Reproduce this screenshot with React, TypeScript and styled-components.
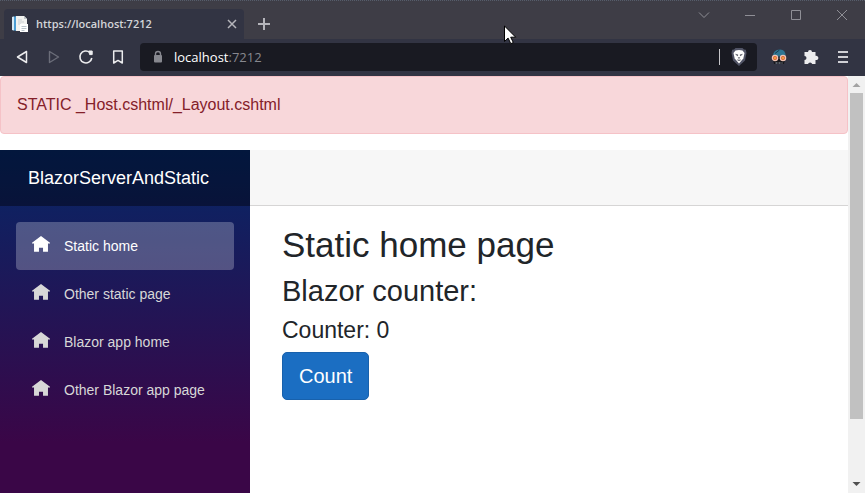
import React, { useState } from "react";
import styled, { createGlobalStyle } from "styled-components";

const GlobalStyle = createGlobalStyle`
  *, *::before, *::after { box-sizing: border-box; }
  html, body, #root { height: 100%; }
  body {
    margin: 0;
    overflow: hidden;
    font-family: "Liberation Sans", Arial, sans-serif;
    font-size: 16px;
    line-height: 24px;
    color: #212529;
    background: #fff;
  }
  svg { display: block; flex: none; }
`;

const CHROME_FONT = `"Open Sans", "Noto Sans", sans-serif`;

const Window = styled.div`
  position: relative;
  display: flex;
  flex-direction: column;
  height: 100vh;
`;

const TitleBar = styled.header`
  display: flex;
  justify-content: space-between;
  align-items: flex-start;
  height: 39px;
  background: #3e3d46;
  border-top: 1px dotted #565d6b;
`;

const TabStrip = styled.div`
  display: flex;
  align-items: center;
  margin-top: 8px;
  padding-left: 4px;
`;

const Tab = styled.div`
  display: flex;
  align-items: center;
  gap: 8px;
  width: 240px;
  height: 30px;
  padding: 0 4px 0 8px;
  border-radius: 4px 4px 0 0;
  background: #323443;
`;

const TabTitle = styled.span`
  flex: 1;
  font-family: ${CHROME_FONT};
  font-size: 11px;
  font-weight: 600;
  line-height: 16px;
  color: #d3d4d9;
  white-space: nowrap;
`;

const IconButton = styled.button<{ $width: number; $height: number }>`
  display: flex;
  flex: none;
  align-items: center;
  justify-content: center;
  width: ${(p) => p.$width}px;
  height: ${(p) => p.$height}px;
  padding: 0;
  border: 0;
  background: transparent;
  color: inherit;
`;

const TabActions = styled.div`
  display: flex;
  color: #b5b5bb;
`;

const WindowControls = styled.div`
  display: flex;
  color: #8f8f96;
`;

const Toolbar = styled.nav`
  display: flex;
  align-items: center;
  gap: 6px;
  height: 37px;
  padding: 0 6px 2px;
  background: #323443;
  color: #ececee;
`;

const ButtonGroup = styled.div`
  display: flex;
  align-items: center;
`;

const AddressBar = styled.div`
  display: flex;
  flex: 1;
  align-items: center;
  gap: 10px;
  height: 28px;
  padding: 0 9px 0 12px;
  border-radius: 4px;
  background: #191a22;
`;

const Address = styled.span`
  flex: 1;
  font-family: ${CHROME_FONT};
  font-size: 13px;
  line-height: 20px;
  color: #fff;
`;

const Port = styled.span`
  color: #87888f;
`;

const Divider = styled.span`
  width: 1px;
  height: 16px;
  background: #c6c6ca;
`;

const Viewport = styled.div`
  display: flex;
  flex: 1;
  min-height: 0;
`;

const Page = styled.div`
  flex: 1;
  min-width: 0;
  overflow: hidden;
`;

const Alert = styled.div`
  margin-bottom: 16px;
  padding: 16px;
  border: 1px solid #f5c2c7;
  border-radius: 4px;
  background: #f8d7da;
  color: #842029;
`;

const Layout = styled.div`
  display: flex;
`;

const Sidebar = styled.aside`
  flex: none;
  width: 250px;
  height: calc(100vh - 76px);
  background: linear-gradient(180deg, rgb(5, 39, 103) 0%, #3a0647 70%);
`;

const Brand = styled.a`
  display: flex;
  align-items: center;
  height: 56px;
  padding-left: 28px;
  background: rgba(0, 0, 0, 0.4);
  font-size: 18px;
  color: #fff;
  text-decoration: none;
`;

const NavList = styled.ul`
  margin: 0;
  padding: 16px;
  list-style: none;
`;

const NavLink = styled.a<{ $active?: boolean }>`
  display: flex;
  align-items: center;
  gap: 14px;
  height: 48px;
  padding: 0 16px;
  border-radius: 4px;
  background: ${(p) => (p.$active ? "rgba(255, 255, 255, 0.25)" : "transparent")};
  color: ${(p) => (p.$active ? "#fff" : "#d7d7d7")};
  font-size: 14px;
  text-decoration: none;
  white-space: nowrap;

  svg { margin-bottom: 2px; }
`;

const Main = styled.main`
  flex: 1;
  min-width: 0;
`;

const TopRow = styled.div`
  height: 56px;
  border-bottom: 1px solid #d6d5d5;
  background: #f7f7f7;
`;

const Article = styled.article`
  padding: 18px 32px;
`;

const PageTitle = styled.h1`
  margin: 0 0 8px;
  font-size: 35px;
  font-weight: 400;
  line-height: 42px;
`;

const SectionTitle = styled.h2`
  margin: 0 0 8px;
  font-size: 29px;
  font-weight: 400;
  line-height: 34px;
`;

const CounterText = styled.h3`
  margin: 0 0 8px;
  font-size: 23px;
  font-weight: 400;
  line-height: 28px;
`;

const CountButton = styled.button`
  padding: 8px 16px;
  border: 1px solid #1861ac;
  border-radius: 5px;
  background: #1b6ec2;
  color: #fff;
  font-family: inherit;
  font-size: 20px;
  line-height: 30px;
`;

const ScrollTrack = styled.div`
  display: flex;
  flex: none;
  flex-direction: column;
  align-items: center;
  width: 17px;
  background: #f1f1f1;
`;

const ScrollRail = styled.div`
  flex: 1;
  width: 13px;
`;

const ScrollThumb = styled.div`
  height: 85%;
  background: #c1c1c1;
`;

const Cursor = styled.svg`
  position: absolute;
  top: 25px;
  left: 504px;
`;

const Favicon = () => (
  <svg width="16" height="16" viewBox="0 0 16 16">
    <path d="M0 1l5-1v15l-5-1z" fill="#4b9cd3" />
    <path d="M0 1l2-.4v13.8L0 14z" fill="#d7e9f4" />
    <path d="M4 0h8l3 3v12H4z" fill="#f2f2f0" />
    <path d="M12 0v3h3z" fill="#bfc5c9" />
    <path d="M6 4h4M6 6h6M6 8h3" stroke="#c9ced2" />
    <path d="M8 8h8v8H8z" fill="#fff" />
    <path d="M9.500 10.500h5M9.500 12.500h5M9.500 14.500h3" stroke="#b9c3ca" />
  </svg>
);

const HomeIcon = () => (
  <svg width="18" height="18" viewBox="0 0 8 8" fill="currentColor">
    <path d="M4 0L0 3v.3h.9V7h2.200V5.200h1.800V7h2.200V3.300H8V3z" />
  </svg>
);

const BackIcon = () => (
  <svg width="14" height="16" viewBox="0 0 14 16" fill="none" stroke="currentColor" strokeWidth="1.500" strokeLinejoin="round">
    <path d="M11.500 2.500v11L2.500 8z" />
  </svg>
);

const ForwardIcon = () => (
  <svg width="14" height="16" viewBox="0 0 14 16" fill="none" stroke="#6b6d79" strokeWidth="1.400" strokeLinejoin="round">
    <path d="M2.500 2.500v11L11.500 8z" />
  </svg>
);

const ReloadIcon = () => (
  <svg width="16" height="16" viewBox="0 0 16 16" fill="none" stroke="currentColor" strokeWidth="1.600">
    <path d="M13.800 9A6 6 0 1 1 11.800 3.400" />
    <path d="M10.800 2h3.400v3.600h-2.600z" fill="currentColor" strokeWidth="1" strokeLinejoin="round" />
  </svg>
);

const BookmarkIcon = () => (
  <svg width="12" height="16" viewBox="0 0 12 16" fill="none" stroke="currentColor" strokeWidth="1.500" strokeLinejoin="round">
    <path d="M1.700 2h8.600v12L6 11.400 1.700 14z" />
  </svg>
);

const LockIcon = () => (
  <svg width="12" height="14" viewBox="0 0 12 14">
    <path d="M3.500 6V4a2.500 2.500 0 0 1 5 0v2" fill="none" stroke="#87888f" strokeWidth="1.400" />
    <rect x="2" y="5" width="8" height="7.500" rx="1" fill="#87888f" />
  </svg>
);

const ShieldIcon = () => (
  <svg width="16" height="18" viewBox="0 0 16 18">
    <path d="M4.500 0h7L13 1.500l1.800.2.700 3.300-1.500 7.500L8 18l-6-5.500L.5 5l.7-3.300L3 1.500z" fill="#515466" />
    <path d="M4.500 2.500L8 2l3.500.5L13.500 5l-1.200 5.500L8 15.500l-4.300-5L2.500 5z" fill="#fff" />
    <path d="M4.500 6.200l2.500.6-.5 1.200zM11.500 6.200L9 6.800 9.500 8zM7.200 9.500h1.600L8 10.700zM6 11.800l2 1 2-1" fill="#333543" stroke="#333543" strokeWidth=".3" />
  </svg>
);

const GogglesIcon = () => (
  <svg width="16" height="16" viewBox="0 0 16 16">
    <path d="M2 8C1.500 3.500 4.500.5 9 .5c4 0 6 3 5.500 7.500z" fill="#2f7593" />
    <path d="M4 4.500l4.500-3.500" stroke="#183e53" />
    <path d="M2 10h12l-1 5H3z" fill="#17171c" />
    <path d="M1 8.500h14" stroke="#20222b" strokeWidth="2" />
    <circle cx="4" cy="9" r="2.600" fill="#d65d30" stroke="#f1c4b2" strokeWidth="1.300" />
    <circle cx="12" cy="9" r="2.600" fill="#d65d30" stroke="#f1c4b2" strokeWidth="1.300" />
    <circle cx="4" cy="9" r="1" fill="#f8b546" />
    <circle cx="12" cy="9" r="1" fill="#f8b546" />
    <path d="M4.500 14h7" stroke="#9ba9b5" strokeDasharray="2 1" />
  </svg>
);

const PuzzleIcon = () => (
  <svg width="16" height="16" viewBox="0 0 16 16" fill="currentColor">
    <path d="M1.500 3H5a2 2 0 1 1 4 0h3.500v3.800a2.200 2.200 0 1 1 0 4.200V15H9.200a2.200 2.200 0 0 0-4.200 0H1.500v-4a2 2 0 0 0 0-4z" />
  </svg>
);

const MenuIcon = () => (
  <svg width="12" height="16" viewBox="0 0 12 16" fill="none" stroke="currentColor" strokeWidth="2">
    <path d="M1 3h10M1 8h10M1 13h10" opacity=".85" />
  </svg>
);

type LineIconProps = { d: string; size?: number; strokeWidth?: number };

const LineIcon = ({ d, size = 12, strokeWidth = 1 }: LineIconProps) => (
  <svg width={size} height={size} viewBox="0 0 12 12" fill="none" stroke="currentColor" strokeWidth={strokeWidth}>
    <path d={d} />
  </svg>
);

const ArrowIcon = ({ d, fill }: { d: string; fill: string }) => (
  <svg width="17" height="17" viewBox="0 0 17 17" fill={fill}>
    <path d={d} />
  </svg>
);

const windowControls = [
  { label: "Search tabs", d: "M1 3.500l5 5 5-5" },
  { label: "Minimize", d: "M1 6.500h10" },
  { label: "Maximize", d: "M1.500 1.500h9v9h-9z" },
  { label: "Close window", d: "M1 1l10 10M11 1L1 11" },
];

const links = ["Static home", "Other static page", "Blazor app home", "Other Blazor app page"];

export default function App() {
  const [count, setCount] = useState(0);
  const [current, setCurrent] = useState(0);

  return (
    <Window>
      <GlobalStyle />
      <TitleBar>
        <TabStrip>
          <Tab>
            <Favicon />
            <TabTitle>https://localhost:7212</TabTitle>
            <TabActions>
              <IconButton $width={16} $height={30} aria-label="Close tab">
                <LineIcon d="M2 2l8 8M10 2l-8 8" strokeWidth={1.5} />
              </IconButton>
            </TabActions>
          </Tab>
          <TabActions>
            <IconButton $width={40} $height={30} aria-label="New tab">
              <LineIcon d="M6 0v12M0 6h12" strokeWidth={2} />
            </IconButton>
          </TabActions>
        </TabStrip>
        <WindowControls>
          {windowControls.map((c) => (
            <IconButton key={c.label} $width={46} $height={28} aria-label={c.label}>
              <LineIcon d={c.d} />
            </IconButton>
          ))}
        </WindowControls>
      </TitleBar>

      <Toolbar aria-label="Browser">
        <ButtonGroup>
          <IconButton $width={32} $height={28} aria-label="Back"><BackIcon /></IconButton>
          <IconButton $width={32} $height={28} aria-label="Forward"><ForwardIcon /></IconButton>
          <IconButton $width={32} $height={28} aria-label="Reload"><ReloadIcon /></IconButton>
          <IconButton $width={32} $height={28} aria-label="Bookmark"><BookmarkIcon /></IconButton>
        </ButtonGroup>
        <AddressBar>
          <LockIcon />
          <Address>localhost<Port>:7212</Port></Address>
          <Divider />
          <IconButton $width={18} $height={28} aria-label="Shields"><ShieldIcon /></IconButton>
        </AddressBar>
        <ButtonGroup>
          <IconButton $width={32} $height={28} aria-label="Extension"><GogglesIcon /></IconButton>
          <IconButton $width={32} $height={28} aria-label="Extensions"><PuzzleIcon /></IconButton>
          <IconButton $width={32} $height={28} aria-label="Menu"><MenuIcon /></IconButton>
        </ButtonGroup>
      </Toolbar>

      <Viewport>
        <Page>
          <Alert role="alert">STATIC _Host.cshtml/_Layout.cshtml</Alert>
          <Layout>
            <Sidebar>
              <Brand href="#">BlazorServerAndStatic</Brand>
              <nav aria-label="Pages">
                <NavList>
                  {links.map((label, i) => (
                    <li key={label}>
                      <NavLink href="#" $active={i === current} onClick={() => setCurrent(i)}>
                        <HomeIcon />
                        {label}
                      </NavLink>
                    </li>
                  ))}
                </NavList>
              </nav>
            </Sidebar>
            <Main>
              <TopRow />
              <Article>
                <PageTitle>Static home page</PageTitle>
                <SectionTitle>Blazor counter:</SectionTitle>
                <CounterText>Counter: {count}</CounterText>
                <CountButton type="button" onClick={() => setCount(count + 1)}>Count</CountButton>
              </Article>
            </Main>
          </Layout>
        </Page>
        <ScrollTrack aria-hidden="true">
          <ArrowIcon d="M4.500 11L8.500 7l4 4z" fill="#a3a3a3" />
          <ScrollRail><ScrollThumb /></ScrollRail>
          <ArrowIcon d="M4.500 6L8.500 10l4-4z" fill="#505050" />
        </ScrollTrack>
      </Viewport>

      <Cursor width="13" height="20" viewBox="0 0 13 20" aria-hidden="true">
        <path d="M.5 1v15.500l3.600-3.400 2.700 5.600 2.500-1.200-2.600-5.300h5z" fill="#fff" stroke="#000" />
      </Cursor>
    </Window>
  );
}
